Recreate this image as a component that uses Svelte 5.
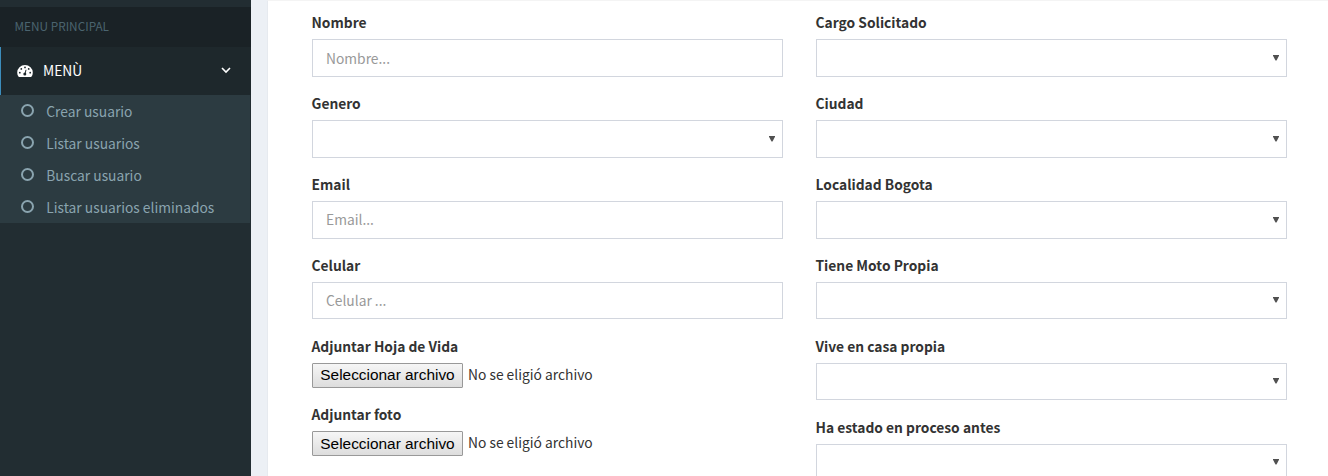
<script>
  const items = ['Crear usuario', 'Listar usuarios', 'Buscar usuario', 'Listar usuarios eliminados'];
  const left = [
    { label: 'Nombre', placeholder: 'Nombre...' },
    { label: 'Genero', select: true },
    { label: 'Email', placeholder: 'Email...', raised: true },
    { label: 'Celular', placeholder: 'Celular ...', short: true, raised: true },
    { label: 'Adjuntar Hoja de Vida', file: true, raised: true },
    { label: 'Adjuntar foto', file: true }
  ];
  const right = [
    { label: 'Cargo Solicitado', select: true },
    { label: 'Ciudad', select: true },
    { label: 'Localidad Bogota', select: true },
    { label: 'Tiene Moto Propia', select: true, short: true, raised: true },
    { label: 'Vive en casa propia', select: true, short: true, raised: true },
    { label: 'Ha estado en proceso antes', select: true, raised: true }
  ];
</script>

{#snippet field(f)}
  <div class="group" class:file={f.file}>
    <span class="label">{f.label}</span>
    {#if f.file}
      <div class="upload" class:raised={f.raised}>
        <button type="button">Seleccionar archivo</button>
        <span>No se eligió archivo</span>
      </div>
    {:else}
      <div class="control" class:short={f.short} class:raised={f.raised}>
        <span class="placeholder">{f.placeholder ?? ''}</span>
        {#if f.select}
          <svg width="6" height="6" viewBox="0 0 6 6"><path d="M0 0h6v.7L3.5 5.6h-1L0 .7z" fill="#505050" /></svg>
        {/if}
      </div>
    {/if}
  </div>
{/snippet}

<div class="page">
  <aside>
    <div class="header">MENU PRINCIPAL</div>
    <div class="parent">
      <svg class="dash" width="16" height="13" viewBox="0 -.5 16 13">
        <path d="M8 .5A7.8 7.5 0 0 0 .2 8c0 1.5.4 2.9 1.2 4.1.2.3.4.4.7.4h11.8c.3 0 .5-.1.7-.4A7.5 7.5 0 0 0 15.8 8 7.8 7.5 0 0 0 8 .5z" fill="#fff" />
        <g fill="#1e282c">
          <circle cx="2.8" cy="8.2" r=".9" /><circle cx="4.3" cy="4.4" r=".9" /><circle cx="8" cy="2.9" r=".9" />
          <circle cx="11.7" cy="4.4" r=".9" /><circle cx="13.2" cy="8.2" r=".9" /><circle cx="7.8" cy="9.6" r="1.5" />
        </g>
        <path d="M8 9.5l1-4.2" stroke="#1e282c" stroke-width="1" />
      </svg>
      <span>MENÙ</span>
      <svg class="chev" width="10" height="7" viewBox="0 0 10 7"><path d="M1 1l4 4 4-4" fill="none" stroke="#fff" stroke-width="1.6" /></svg>
    </div>
    <ul>
      {#each items as item}
        <li>
          <svg width="14" height="14" viewBox="0 0 14 14"><circle cx="7.5" cy="7.5" r="5.5" fill="none" stroke="#8aa4af" stroke-width="2" /></svg>
          <span>{item}</span>
        </li>
      {/each}
    </ul>
  </aside>
  <main>
    <section>
      <div class="column">{#each left as f}{@render field(f)}{/each}</div>
      <div class="column">{#each right as f}{@render field(f)}{/each}</div>
    </section>
  </main>
</div>

<style>
  .page {
    display: flex;
    height: 476px;
    overflow: hidden;
    background: #ecf0f5;
    color: #333;
    font: 13.8px/22px "Noto Sans CJK SC", "Noto Sans", sans-serif;
  }
  aside { width: 251px; flex: none; box-sizing: border-box; padding-top: 7px; background: #222d32; }
  .header {
    height: 40px;
    padding-left: 14.5px;
    line-height: 38px;
    font-size: 11.8px;
    color: #4b646f;
    background: #1a2226;
  }
  .parent {
    display: flex;
    align-items: center;
    box-sizing: border-box;
    height: 48px;
    padding: 0 20px 0 16px;
    border-left: 1px solid #3c8dbc;
    background: #1e282c;
    color: #fff;
  }
  .parent span { flex: 1; margin: 0 0 2px 10px; }
  .dash { margin-bottom: 1px; }
  .chev { margin-bottom: 1px; }
  ul { list-style: none; margin: 0 1px 0 0; padding: 0; background: #2c3b41; }
  li { display: flex; align-items: center; height: 32px; padding-left: 20px; color: #8aa4af; }
  li svg { flex: none; margin-bottom: 2px; }
  li span { margin-left: 12.3px; }
  main { flex: 1; padding-left: 16px; }
  section {
    display: flex;
    gap: 33px;
    box-sizing: border-box;
    height: 476px;
    padding: 10px 41px 0 43px;
    border-top: 1px solid #f4f4f4;
    border-left: 1px solid #e6eaef;
    background: #fff;
  }
  .column { flex: 1; }
  .column:first-child { margin-left: 1px; }
  .group { height: 81px; }
  .group.file { height: 68px; }
  .label { display: block; height: 28px; margin-left: -0.5px; line-height: 22px; font-weight: 700; }
  .control {
    display: flex;
    align-items: center;
    justify-content: space-between;
    box-sizing: border-box;
    height: 38px;
    padding: 0 7px 0 13px;
    border: 1px solid #d2d6de;
  }
  .control.short { height: 37px; }
  .control.raised { padding-bottom: 2px; }
  .control.short.raised { padding-bottom: 1px; }
  .placeholder { color: #999; }
  .upload { display: flex; align-items: center; gap: 5px; height: 25px; }
  .upload span { margin-bottom: 3px; }
  .upload button {
    width: 151px;
    height: 25px;
    padding: 0;
    border: 1px solid #999;
    border-radius: 1px;
    background: linear-gradient(#f6f6f6, #ddd);
    color: #000;
    font: 15.4px/22px "Liberation Sans", Arial, sans-serif;
    white-space: nowrap;
  }
  .upload.raised button { padding-bottom: 2px; }
</style>
